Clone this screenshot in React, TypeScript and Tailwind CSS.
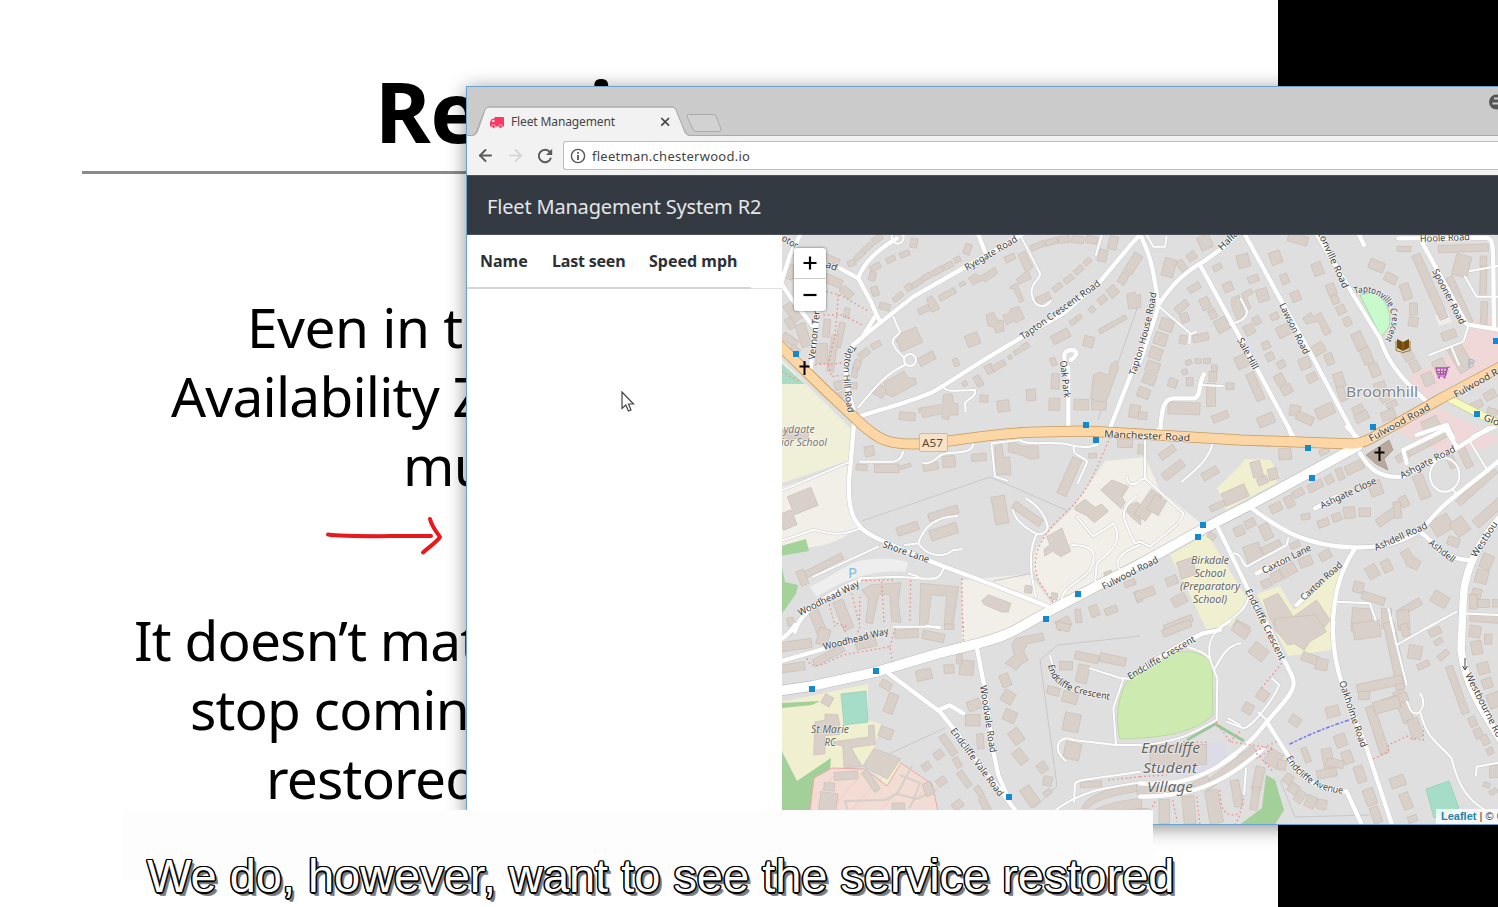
import { ArrowLeft, ArrowRight } from "lucide-react";

type Rect = [number, number, number, number, number];
type Tile = {
  x: number;
  y: number;
  rects: Rect[];
  shapes: string[];
  roads: string[];
  lanes: string[];
  paths: string[];
};

/* The map is surveyed in six sheets, each drawn at three times its size. */
const tiles: Tile[] = [
  {
    x: 780,
    y: 235,
    rects: [
      [215, 84, 24, 18, -20], [238, 62, 34, 17, -42], [262, 38, 34, 17, -42], [292, 12, 34, 18, -35],
      [332, 73, 28, 16, -25], [374, 57, 30, 16, -22], [402, 24, 20, 28, 12], [563, 42, 20, 32, 20],
      [286, 96, 34, 18, -30], [277, 124, 20, 26, 15], [285, 169, 20, 28, -18], [314, 215, 32, 20, 14],
      [354, 186, 34, 16, -38], [386, 157, 22, 20, -35], [411, 145, 34, 16, -32], [440, 125, 28, 17, -30],
      [473, 108, 36, 17, -30], [505, 92, 28, 17, -28], [532, 74, 20, 16, -25], [502, 178, 54, 18, -28],
      [547, 147, 18, 12, -25], [432, 224, 36, 18, -25], [690, 69, 32, 18, -25], [386, 313, 70, 50, -24],
      [578, 314, 40, 36, -22], [528, 382, 16, 24, -25], [440, 371, 52, 26, -28], [288, 330, 30, 17, -28],
      [252, 356, 36, 20, -38], [232, 388, 20, 28, 20], [224, 413, 17, 28, 5], [222, 452, 18, 20, 0],
      [773, 32, 44, 17, -22], [815, 20, 36, 18, -15], [852, 14, 34, 20, -5], [893, 14, 36, 20, 5], [935, 14, 34, 22, 12],
      [968, 62, 26, 36, 14], [999, 24, 26, 40, 12], [922, 80, 24, 16, -40], [896, 105, 30, 17, -40],
      [866, 132, 30, 17, -38], [832, 157, 30, 17, -38], [790, 190, 44, 22, -25], [1060, 85, 28, 64, 32],
      [1030, 130, 24, 34, 30], [998, 169, 30, 30, -40], [967, 194, 28, 20, -40], [936, 223, 18, 18, -45],
      [880, 260, 22, 15, -35], [897, 247, 18, 14, -35], [998, 268, 92, 14, -29], [842, 304, 56, 28, -27],
      [926, 320, 30, 32, 15], [820, 380, 16, 24, -20], [826, 439, 24, 46, 4], [823, 508, 32, 36, 2],
      [904, 509, 44, 32, 2], [957, 508, 44, 34, 3], [753, 480, 28, 34, -4], [670, 513, 36, 34, -8],
      [612, 491, 24, 22, 2], [712, 350, 22, 14, -30], [736, 334, 24, 17, -32], [690, 367, 12, 12, -30],
      [554, 446, 14, 14, -30], [595, 438, 20, 34, -30], [628, 402, 24, 28, -28], [656, 392, 44, 18, -30],
      [382, 544, 48, 24, 5], [300, 468, 34, 34, 30], [1064, 529, 32, 38, 10], [150, 72, 58, 20, 22],
      [160, 138, 54, 26, 24], [200, 172, 40, 24, 40], [40, 230, 34, 60, -35], [70, 300, 30, 70, -18], [30, 265, 22, 34, -30],
      [200, 234, 16, 30, 10], [180, 300, 18, 76, 12], [140, 280, 20, 54, 5], [125, 355, 34, 60, 0], [158, 355, 20, 110, 8],
      [30, 315, 50, 24, 35], [45, 345, 28, 20, 35], [30, 110, 26, 46, 14], [180, 450, 34, 26, -15], [184, 480, 50, 18, -15],
    ],
    shapes: [
      "M440 190l16-8 12 20 12 20-24 10-10-18z",
      "M565 130l22-14 14 8 44-28 8 20-36 24-12-4-26 14z",
      "M713 58l22-10 24 48-14 14 10 20-38 18-8-16 28-22z",
      "M690 155l20-10 22 52-12 6-20-44-8 4z",
      "M618 240l22-8 14 24 16 0 2 32-24 6-6-18-18-4z",
      "M668 240l20-4 4-14 24-8 18 36-26 14-6-6-22 12z",
      "M312 442l60-34 12 20 22 2 4 16-72 40-18-8z",
      "M416 520l72-12 2-28 26-4 4 28 14 2 0 34-26 0-2 14-20-4 0-14-58 12-2-14-10-2z",
      "M940 420l20-8 26 8 6-30 16-14 8 20-14 40-18 50-14 16-38-10z",
      "M1040 178l24-8 6 12 12-4 0 40-36 4z",
    ],
    roads: [
      "M180 100L235 130L275 205L290 240L302 262",
      "M220 328L302 262L400 185L540 105L700 15L730-5",
      "M285 245L245 310L222 328C195 355 195 400 200 450L225 540",
      "M235 130C250 80 300 40 350 10",
      "M225 550C300 520 340 520 450 475C500 450 540 415 720 310L850 235L960 140L1060 20L1080 0",
      "M90 420L100 330L115 230M0 140L30 185L98 272M60 0L30 60L5 140",
      "M865 580L865 400C845 365 850 345 875 345C900 348 885 368 872 375",
      "M990 580L1060 400L1080 340M595 0L615 50",
    ],
    lanes: [
      "M725 8L780 115C785 130 750 145 755 175C760 215 790 225 812 198",
      "M340 245L350 270L360 290C355 305 335 305 338 325L350 345L372 368M375 390C320 415 290 450 235 517",
      "M372 375a18 18 0 1 0 36 0a18 18 0 1 0-36 0M335 8a17 17 0 1 0 36 0a17 17 0 1 0-36 0",
      "M490 455C500 475 530 465 585 465C592 485 560 492 555 505L557 530",
      "M965 0L948 60",
    ],
    paths: ["M140 170L180 180L265 228M130 240L190 240L250 272M175 180L165 300L145 390L190 382M145 390L155 425L185 420M105 390L145 385M5 410L60 440"],
  },
  {
    x: 1140,
    y: 235,
    rects: [
      [155, 64, 28, 24, -35], [125, 92, 22, 34, -35], [195, 22, 38, 42, -25], [232, 97, 26, 18, -28], [264, 156, 28, 28, -25],
      [163, 158, 38, 20, -30], [196, 206, 28, 36, -25], [218, 237, 22, 28, -25], [245, 270, 38, 40, -28], [182, 308, 48, 22, -12],
      [310, 78, 36, 40, -15], [340, 132, 32, 20, -20], [368, 180, 34, 38, -18], [407, 68, 34, 38, -20], [434, 132, 22, 30, -20],
      [467, 184, 28, 30, -22], [404, 244, 24, 20, -22], [350, 257, 22, 24, -25], [328, 284, 30, 30, -28], [378, 331, 24, 22, -25],
      [390, 365, 24, 24, -25], [424, 388, 24, 22, -28], [420, 434, 28, 34, -28], [440, 464, 32, 28, -28], [432, 287, 42, 34, -25],
      [533, 102, 30, 38, -22], [574, 163, 26, 34, -22], [585, 194, 22, 26, -22], [603, 224, 26, 26, -25], [622, 260, 22, 26, -25],
      [657, 318, 32, 54, -25], [680, 363, 30, 48, -22], [704, 405, 28, 40, -22], [568, 372, 24, 34, -20], [494, 385, 34, 34, -22],
      [532, 344, 46, 32, -32], [516, 428, 30, 26, -26], [598, 436, 30, 46, -18], [606, 476, 22, 44, -22], [720, 455, 34, 26, -18],
      [710, 92, 46, 30, 22], [752, 130, 38, 26, 28], [798, 170, 28, 48, -18], [820, 222, 24, 36, 0], [820, 260, 28, 28, 10],
      [346, 455, 26, 88, -24], [305, 380, 36, 38, -25], [241, 545, 50, 22, -22], [132, 520, 96, 36, 2], [270, 454, 24, 20, 0],
      [146, 382, 18, 15, -25], [174, 378, 18, 14, 0], [201, 378, 20, 15, 0], [223, 400, 17, 20, 0], [218, 424, 22, 30, 0],
      [134, 411, 16, 16, -15], [149, 440, 20, 26, 0], [98, 444, 26, 26, 20], [213, 480, 26, 68, 0], [129, 314, 20, 26, 10],
      [80, 270, 40, 36, 18], [62, 312, 38, 36, 18], [47, 355, 38, 34, 20], [38, 396, 40, 32, 20], [28, 432, 38, 32, 20],
      [11, 474, 36, 30, 20], [8, 542, 26, 22, 5], [125, 215, 44, 22, -40], [134, 248, 24, 28, -20], [87, 98, 36, 54, 15],
      [870, 155, 26, 210, -24], [958, 195, 22, 150, -24], [965, 92, 46, 64, 15], [970, 40, 150, 22, -2], [792, 42, 42, 16, 0],
      [1030, 138, 20, 90, 2], [1032, 235, 20, 70, 2], [1030, 78, 20, 30, 2], [927, 300, 44, 26, -20],
      [805, 362, 30, 30, -28], [825, 394, 26, 32, -28], [864, 432, 32, 38, -22], [900, 396, 36, 46, -25], [962, 370, 46, 80, -30],
      [655, 525, 34, 26, -25], [665, 545, 42, 26, -25], [745, 540, 42, 28, -20], [735, 490, 28, 20, -30], [755, 508, 32, 18, -25],
      [465, 527, 32, 32, 10], [495, 550, 52, 26, 24], [555, 528, 56, 34, -25], [378, 555, 50, 32, -22], [474, 12, 60, 28, 15],
      [872, 568, 52, 36, -25], [1010, 510, 36, 22, -25], [1050, 480, 36, 26, -28], [1056, 530, 30, 20, 20],
    ],
    shapes: [
      "M275 190l22-10 18 60-24 14-16-40z",
      "M305 175l28-14 8 12-22 14 14 32-12 6z",
      "M488 250l24-18 8 12 22-12 32 60-20 10-20-44-34 10z",
    ],
    roads: [
      "M55 208C45 150 40 80 10 20L0-5M55 210C90 160 120 120 190 80L260 30L295-5",
      "M55 208C50 240 20 320 0 380",
      "M180 90L290 290L350 400L460 605M310-10L420 190L520 370L645 605",
      "M520-20L640 180L720 310C740 370 770 420 860 500",
      "M845 20L900 120L980 268L1080 285M775 10L1040 8C1065 15 1058 30 1062 275",
      "M655-5L672 30M60 595C65 540 65 490 100 490L165 490C185 480 175 440 192 418",
      "M830 600L920 570L940 610M1000 605L1075 570",
    ],
    lanes: [
      "M55 212L150 295L148 325M150 300L168 290M185 450L248 453",
      "M270 268C305 260 325 245 320 225L303 192M20 0L40 35L75 35L80 5",
      "M985 275L970 320L868 360M935 338L957 390M990 108L1074 93M975 125L1010 185L1074 185",
    ],
    paths: [],
  },
  {
    x: 780,
    y: 430,
    rects: [
      [268, 64, 28, 30, -10], [245, 112, 34, 18, 5], [320, 115, 74, 26, 0], [376, 109, 34, 10, -18], [452, 110, 46, 22, -10],
      [507, 95, 38, 34, -5], [597, 82, 44, 22, -5], [938, 77, 24, 14, -5], [868, 140, 30, 118, 24], [490, 250, 92, 24, -17],
      [383, 296, 66, 26, -18], [491, 305, 84, 32, -18], [660, 240, 40, 84, -10], [742, 252, 100, 24, 35], [130, 407, 128, 20, -27],
      [67, 443, 24, 46, -22], [68, 213, 76, 58, -22], [22, 270, 44, 48, -22], [745, 478, 22, 22, 10], [823, 499, 18, 20, 10],
      [985, 432, 24, 16, -20], [895, 558, 18, 40, -5], [943, 543, 26, 34, -22], [993, 541, 38, 20, -22], [850, 580, 44, 30, -25],
      [1050, 460, 34, 18, -20], [1075, 500, 18, 34, -20], [1035, 40, 44, 26, 0], [32, 575, 20, 24, -15],
      [45, 15, 80, 20, 8], [115, 580, 30, 90, -22], [190, 555, 32, 90, -22], [15, 15, 60, 22, 10],
    ],
    shapes: [
      "M645 50l20-8 6 40 18 0 4 52-46 0z",
      "M685 38l20 0 20 10 50 0 2 36-24 4-40-16-28-6z",
      "M605 512l20-18 68 26-8 26-20 0-52-22z",
      "M962 180l34-30 50 20-20 32 10 14-12 20z",
      "M885 230l30-22 30 24 20-10 20 22-42 34-24-22-34-16z",
      "M800 320l46-26 14 40 12 30-30 16-24-16-24 14-2-20 18-14z",
      "M1030 235l40-20 12 10 0 60-24-20z",
      "M245 480l30-16 88-6-8 60 8 60-28-4-6-80-32-2-20 90-20-6 8-70z",
      "M422 460l114 10-18 122-26-4 8-90-46-4-12 100-24-4z",
    ],
    roads: ["M222-20L212 100C205 150 200 210 220 260C245 310 270 320 480 405L640 465L825 538", "M240 450C150 490 60 540 45 605"],
    lanes: [
      "M5 332L100 300C140 305 170 325 240 295M5 182L210 95M240 95L340 95C360 92 365 80 370 65",
      "M430 100C470 100 465 75 500 70C560 65 575 65 580 42M635 45L645 140L682 152M635 40L720 30C740 50 830 30 870 45C910 55 940 50 955 42",
      "M882 48C875 80 905 75 922 95L893 160M738 205C790 235 810 290 800 300C780 325 765 310 735 290C710 270 705 260 698 240",
      "M770 312C740 370 755 450 768 500M532 258C470 260 430 290 415 340L375 345M415 340C440 380 490 385 520 360L545 358",
      "M295 350L100 440M490 415C480 460 450 445 350 440L240 445M385 430L415 440",
      "M890 260L940 320L1000 280C1030 330 1000 360 950 400L945 465M875 345C940 345 955 370 930 420C900 460 840 470 845 520",
      "M1070 200C1010 240 1030 270 1065 340L1080 335M1080 345C1010 370 1000 400 1025 425M1042 140C1040 170 1065 165 1080 152M340 590L480 590",
    ],
    paths: [
      "M997 10C950 100 940 170 860 245C790 310 740 380 780 460L825 525",
      "M545 445L548 600M230 452L345 450M305 455L312 580M392 450L390 575M145 510L165 590M215 490L235 570M240 500L238 590M170 580L200 590",
    ],
  },
  {
    x: 1140,
    y: 430,
    rects: [
      [5, 58, 22, 28, 10], [82, 67, 52, 22, -35], [100, 120, 74, 26, -38], [210, 130, 52, 24, -30], [435, 72, 38, 34, -5],
      [285, 195, 76, 40, -24], [232, 228, 46, 18, -24], [350, 118, 30, 48, -15], [368, 152, 32, 22, -25], [399, 132, 28, 34, -15],
      [408, 233, 36, 26, -25], [448, 215, 26, 34, -25], [475, 189, 34, 22, -28], [526, 168, 48, 24, -28], [568, 148, 24, 26, -28],
      [600, 132, 20, 36, -22], [643, 112, 56, 28, -26], [552, 65, 30, 16, -25], [497, 260, 26, 18, -10], [550, 279, 34, 22, -20],
      [590, 262, 28, 24, -20], [628, 248, 34, 34, -5], [674, 247, 34, 26, 0], [707, 175, 38, 44, -20], [792, 215, 24, 32, -28],
      [745, 258, 80, 26, -35], [772, 240, 22, 50, -5], [845, 170, 32, 74, -22], [298, 303, 30, 28, -22], [330, 280, 32, 24, -25], [378, 305, 30, 48, -25],
      [340, 370, 50, 54, -18], [395, 352, 60, 24, -24], [380, 460, 30, 24, -25], [410, 440, 30, 30, -25], [445, 420, 46, 34, -30],
      [497, 395, 40, 28, -22], [556, 376, 36, 26, -28], [465, 345, 30, 18, -25], [697, 425, 34, 38, -30], [740, 408, 28, 36, -25],
      [655, 472, 30, 32, 15], [700, 505, 70, 24, 18], [900, 508, 50, 36, 30], [812, 530, 70, 22, -30], [790, 570, 36, 60, -5],
      [740, 565, 30, 60, 0], [665, 570, 60, 70, 5], [1030, 520, 36, 24, 0], [1010, 490, 28, 28, 15], [1025, 440, 36, 40, 15],
      [1040, 395, 34, 44, 22], [1000, 515, 22, 44, 0], [1035, 565, 90, 24, 4], [1068, 520, 20, 22, 0], [215, 318, 24, 18, 35],
      [15, 490, 60, 26, -20], [118, 510, 44, 30, -28], [95, 452, 34, 26, -20], [140, 415, 48, 52, -18], [115, 580, 90, 22, -22],
      [25, 225, 40, 90, 35], [50, 225, 40, 50, 30], [940, 335, 36, 26, 20], [905, 285, 60, 50, -30], [960, 290, 44, 50, -35],
      [1010, 170, 150, 22, -42], [1055, 240, 130, 30, -42], [975, 80, 24, 70, -25], [870, 35, 150, 22, -28], [935, 95, 22, 40, -25], [788, 80, 40, 22, -30],
      [305, 590, 48, 24, 30],
    ],
    shapes: [
      "M370 510l44-20 50 76-20 30-34 10-24-50z",
      "M460 560l70-50 40 60-30 40-66 20z",
      "M780 370l24-16 14 22 26 20-14 24-30-12-6-18z",
    ],
    roads: [
      "M335 235C400 280 480 350 640 352C760 355 830 320 870 270C920 210 960 190 1080 90",
      "M525 235L590 200M660 70C690 120 720 145 790 140L950 55L1045-5M800 100L790 60L912 0M912-10L950 50",
      "M235 295L320 470L385 600M845 310C880 330 900 385 985 390",
      "M645 355C610 410 580 470 578 605M620-10L655 25M455 20L445-10",
      "M350 430L440 385M470 525L500 495",
    ],
    lanes: [
      "M870 135a44 50 0 1 0 88 0a44 50 0 1 0-88 0M990 35L1045 125M940 180L950 195",
      "M960 550L1080 555M950 545L850 600M590 515L690 520L707 570M745 535L762 605",
      "M282 370C310 375 300 395 320 410L440 345L445 325M325 505C310 550 280 560 230 600M218 38C210 80 180 110 125 155",
      "M15 30L15 140M15 145L130 250C125 280 90 300 30 350L0 335M0 150L18 145M50-5L62 0",
    ],
    paths: [],
  },
  {
    x: 780,
    y: 625,
    rects: [
      [50, 60, 90, 28, -8], [145, 92, 100, 22, -28], [257, 52, 62, 34, -12], [40, 127, 70, 24, -8], [130, 35, 34, 50, 15],
      [380, 26, 70, 26, -4], [460, 34, 66, 26, 12], [432, 149, 46, 32, -12], [507, 132, 30, 26, -4], [560, 128, 42, 44, 5], [538, 102, 16, 30, 5],
      [318, 180, 34, 24, 30], [333, 235, 30, 60, 20], [318, 324, 40, 32, 20], [582, 240, 40, 30, -22], [578, 286, 44, 34, 0], [601, 349, 20, 46, -5],
      [676, 166, 28, 38, -22], [684, 216, 36, 36, 30], [690, 273, 38, 34, 25], [709, 334, 34, 44, -35], [721, 395, 30, 46, -38],
      [787, 427, 28, 30, -38], [750, 514, 34, 62, -35], [803, 468, 26, 28, 10], [803, 503, 24, 16, -35],
      [505, 360, 22, 70, -35], [476, 389, 28, 24, -35], [439, 424, 26, 22, -35], [532, 413, 18, 32, -30], [553, 462, 20, 54, -35],
      [484, 470, 30, 24, -35], [597, 499, 18, 32, -35], [533, 540, 32, 24, -35], [615, 540, 22, 48, -25], [142, 226, 28, 30, 30],
      [920, 97, 72, 24, 12], [998, 104, 80, 26, 12], [858, 122, 40, 26, 0], [908, 146, 34, 54, 12], [820, 198, 38, 24, 15], [870, 218, 46, 32, 15],
      [875, 292, 48, 54, 12], [877, 378, 48, 50, 12], [933, 478, 64, 18, -4], [850, 5, 40, 22, 15], [508, 5, 28, 16, 0],
      [198, 452, 70, 24, -4], [273, 468, 20, 70, -35], [148, 485, 32, 24, 5], [145, 530, 52, 54, 8], [445, 492, 26, 40, -20], [355, 545, 38, 22, 0],
    ],
    shapes: [
      "M695 60l12-20 80-16 6 22-50 10-12 22 14 28-22 12-14 18-34-22 28-24z",
      "M105 290l30-4 0-18 38 0 6 30 0 30-44 4 0 54-34 4z",
      "M160 350l106-14 0-34 16-2 4 58-72 10 20 36 14 22-56 2-4-66-28-4z",
      "M282 370l80 32-40 60-74-38z",
      "M905 550c20-50 100-60 180-80l0 26c-70 15-130 20-160 54z",
      "M940 558c40-25 90-30 145-40l0 36z",
    ],
    roads: [
      "M325 145L480 260L520 310L600 420L665 500L712 565M590 65L612 180L640 380L655 450L685 520",
      "M475 255L510 241L550 265M5 108L130 72M45 0C35 20 20 30 5 42",
    ],
    lanes: [
      "M810 92L825 145M930 130L1030 162L1000 250L1008 360L880 345C840 325 810 370 858 408M1008 360L1080 360",
      "M882 530L885 475C900 462 920 465 1080 440M820 560C900 500 960 490 1085 472M440 2L480 10M1030 160L1050 162",
    ],
    paths: ["M550-10L550 60M80 100C100 150 150 100 200 88L330 65L338 120M330 65L345 10M985 465L1080 455M190 5L200 30M240 5L232 25"],
  },
  {
    x: 1140,
    y: 625,
    rects: [
      [110, 10, 90, 22, -22], [303, 16, 50, 32, 35], [356, 80, 50, 40, 38], [368, 210, 32, 32, 35], [324, 250, 30, 30, 30],
      [465, 287, 32, 28, 35], [578, 260, 40, 32, -15], [602, 347, 34, 38, -20], [622, 397, 30, 38, -20], [660, 448, 28, 50, -18],
      [690, 516, 32, 50, -20], [708, 570, 26, 50, -20], [773, 470, 44, 32, -20], [798, 528, 28, 50, -22], [818, 582, 28, 20, -20],
      [115, 388, 170, 60, 0], [510, 100, 50, 26, 20], [545, 118, 36, 34, 10], [825, 82, 40, 40, 10], [850, 120, 38, 18, -25],
      [910, 90, 36, 18, -40], [895, 50, 26, 16, -35], [885, 20, 36, 22, -25], [795, 15, 22, 38, -18], [1010, 68, 32, 40, -10], [1030, 130, 34, 34, -15],
      [1042, 175, 30, 30, -18], [1065, 225, 44, 44, -20], [1005, 20, 34, 34, 10], [1045, 42, 22, 30, 0], [952, 195, 22, 150, -20],
      [998, 290, 22, 30, -22], [1015, 325, 24, 30, -25], [1035, 345, 22, 30, -25], [1050, 378, 20, 20, -25], [1062, 440, 26, 36, 0], [1040, 480, 20, 14, 25], [1060, 500, 24, 14, -30],
      [765, 85, 32, 190, -12], [720, 178, 140, 28, -12], [680, 15, 80, 50, -8], [790, 245, 32, 100, -20], [765, 225, 80, 26, -18],
      [712, 315, 28, 150, -18], [825, 310, 34, 60, -18], [740, 240, 80, 36, -15], [672, 212, 32, 24, 0], [780, 185, 26, 16, 0],
      [400, 400, 44, 46, 30], [425, 420, 26, 30, 10], [445, 462, 26, 30, 35], [460, 490, 30, 30, 35], [480, 515, 26, 36, 38], [512, 530, 30, 36, 25], [545, 538, 30, 28, 10],
      [270, 430, 190, 26, -38], [185, 475, 50, 26, -25], [290, 505, 26, 80, -10], [355, 460, 28, 70, 12], [345, 520, 22, 70, 8],
      [222, 545, 40, 100, -10], [147, 555, 36, 84, -5], [73, 560, 32, 72, 0], [20, 490, 60, 32, -5],
      [498, 390, 18, 46, -20], [565, 410, 30, 80, -10], [585, 415, 52, 24, 10], [560, 445, 60, 26, -10], [10, 570, 30, 40, 0],
    ],
    shapes: ["M405-20l120-10 34 50-50 30-16 26-30-20-20 4-40-50z"],
    roads: [
      "M378-10L430 100L455 150C470 180 465 200 380 290L440 385C470 450 520 495 620 500L668 605",
      "M580-10C575 60 590 130 610 190L680 370L758 605",
      "M380 290C330 360 280 390 240 420M0 515C150 515 250 480 370 370M0 475C100 480 180 470 285 390",
      "M0 135C70 90 130 50 190 25L240 15",
    ],
    lanes: [
      "M0 362C120 350 170 320 230 285L232 160C220 130 205 100 208 80C205 50 220 15 272-10M140 65C180 75 200 90 208 100M225 130C250 80 270 60 302 55",
      "M750-20L780 100L800 180M770 60L885-5M840 205C860 230 845 270 825 265C805 260 810 240 800 230M842 265C860 340 890 350 935 400C955 490 990 530 1040 558",
      "M395 160L418 180C390 240 330 310 310 310L260 290M355 262L380 285M1008 452L1010 425L1080 412M318 430L312 510M265 280L300 300",
    ],
    paths: [
      "M425 115L360 195M228 290L270 350L400 370L350 400M300 320L270 350M410 350L345 380L400 440M700 402L745 380L745 360L810 330M810 340L850 345L850 305",
      "M0 455L80 450M45 530L30 560M98 525L112 590M170 515L180 600M240 495C240 560 260 580 300 565L312 510M285 600L300 570M130 350L200 352",
    ],
  },
];

const straight: [string, number, number, number, number][] = [
  ["Ryegate Road", 967, 271, 1018, 241],
  ["Tapton Crescent Road", 1023, 340, 1101, 285],
  ["Oak Park", 1060, 361, 1064, 398],
  ["Vernon Ter", 815, 360, 820, 311],
  ["Halla", 1222, 251, 1239, 234],
  ["tonville Road", 1318, 234, 1343, 289],
  ["Lawson Road", 1279, 305, 1304, 355],
  ["Sale Hill", 1237, 340, 1253, 370],
  ["Spooner Road", 1432, 271, 1460, 325],
  ["Hoole Road", 1420, 242, 1470, 240],
  ["Fulwood R", 1456, 398, 1499, 374],
  ["Fulwood Road", 1371, 442, 1431, 409],
  ["Manchester Road", 1104, 437, 1190, 441],
  ["Glo", 1483, 420, 1498, 426],
  ["Ashgate Road", 1402, 479, 1456, 451],
  ["Ashgate Close", 1322, 509, 1377, 483],
  ["Ashdell Road", 1376, 551, 1428, 528],
  ["Ashdell", 1428, 544, 1452, 563],
  ["Westbou", 1476, 558, 1498, 524],
  ["Caxton Lane", 1264, 574, 1312, 550],
  ["Caxton Road", 1304, 601, 1343, 566],
  ["Endcliffe Crescent", 1245, 591, 1280, 661],
  ["Endcliffe Crescent", 1130, 680, 1196, 641],
  ["Woodvale Road", 980, 686, 990, 753],
  ["Endcliffe Vale Road", 950, 731, 999, 797],
  ["Oakholme Road", 1339, 682, 1361, 748],
  ["Westbourne Ro", 1465, 675, 1497, 738],
  ["Woodhead Way", 800, 616, 860, 586],
  ["Woodhead Way", 824, 650, 889, 634],
  ["Shore Lane", 882, 547, 928, 563],
  ["Fulwood Road", 1104, 590, 1159, 562],
  ["otor", 781, 240, 796, 249],
  ["ad", 825, 267, 836, 271],
];

const curved: [string, string, number][] = [
  ["Tapton House Road", "M1135 376Q1149 335 1157 291", 86],
  ["Tapton Hill Road", "M851 344C840 360 843 385 848 414", 71],
  ["Taptonville Crescent", "M1355 294C1372 288 1391 299 1392 320Q1390 334 1382 345", 74],
  ["Endcliffe Crescent", "M1048 665C1052 690 1075 694 1117 701", 76],
  ["Endcliffe Avenue", "M1286 758Q1304 791 1346 794", 70],
];

const centred: [string, number, number, number, string][] = [
  ["Birkdale", 1210, 564, 38, "#666"],
  ["School", 1210, 577, 31, "#666"],
  ["(Preparatory", 1210, 590, 60, "#666"],
  ["School)", 1210, 603, 34, "#666"],
  ["St Marie", 830, 733, 38, "#666"],
  ["RC", 830, 746, 11, "#666"],
  ["ydgate", 799, 433, 31, "#777"],
  ["ior School", 804, 446, 46, "#777"],
];

const stops = [
  [796, 354], [1086, 425], [1096, 440], [1373, 427], [1308, 448], [1312, 478], [1203, 525], [1198, 537],
  [1078, 594], [1046, 619], [876, 671], [812, 689], [1009, 797], [1477, 414], [1496, 341],
];

const FULWOOD = "M778 691L812 686L876 672L940 653L980 643C1010 635 1015 630 1053 609L1093 588L1140 564L1203 529L1250 505L1307 474L1358 446";
const A57 = "M776 342L823 388L857 420C880 442 890 444 913 444C950 444 980 433 1040 432L1085 431L1140 434L1240 440L1353 444Q1366 443 1380 433L1400 422L1440 399L1502 366";
const WESTBOURNE = "M1502 516C1480 540 1463 570 1463 605L1461 650C1465 680 1475 700 1502 742";

function place(t: Tile) {
  return `translate(${t.x} ${t.y}) scale(.33333)`;
}

function StreetMap() {
  return (
    <svg viewBox="782 235 716 589" className="block h-[589px] w-[716px]" fontFamily="'Noto Sans', 'Open Sans', sans-serif" fontSize="10">
      <rect x="782" y="235" width="716" height="589" fill="#dfdfdf" />
      {/* land use */}
      <path d="M780 358L852 430L850 460L780 484Z" fill="#f0f0d8" />
      <path d="M780 362L805 384L780 384Z" fill="#a9dcc4" />
      <path d="M780 488L850 464L850 500L860 528L838 540L825 545L780 552Z" fill="#f2eee8" />
      <path d="M962 580L1030 574L1055 608L1020 625L962 643Z" fill="#f2eee8" />
      <path d="M1105 461L1145 457L1160 490L1203 525L1055 606L1034 572C1028 540 1060 525 1075 505Z" fill="#f2eee8" />
      <path d="M781 546L806 539L809 551L781 556ZM781 562L785 582L798 585L796 594L781 615Z" fill="#a3d39b" />
      <path d="M1217 488L1240 466L1245 459L1270 460L1280 475L1276 483L1226 510Z" fill="#f0f0d0" />
      <path d="M1170 555L1207 534L1248 600L1232 625L1206 629L1190 595Z" fill="#f0f0d0" />
      <path d="M1257 594L1280 586L1294 610L1340 566L1331 650L1288 656Z" fill="#f0f0d0" />
      <path d="M782 702L868 684L868 720L881 724L874 747L901 763L887 786L870 768L832 768L797 781L782 750Z" fill="#f0f0d0" />
      <path d="M782 752L797 781L831 758L830 770L824 830L782 830Z" fill="#a3cf98" />
      <path d="M782 703L820 701L812 705L782 708Z" fill="#a3cf98" />
      <path d="M814 778L832 768L864 769L887 786L901 763L932 784L938 811L810 811Z" fill="#f3dcd4" stroke="#e9aaaa" />
      <path d="M814 798l22-24M830 810l34-38M850 811l40-42M880 811l25-28M905 811l20-22" stroke="#efc4bc" strokeWidth=".7" />
      <path d="M848 811l-3-10 40-1 12-6 15-28M897 794l20 5 20-10M900 775l20 8-10 25" fill="none" stroke="#d5d0cc" strokeWidth="2" />
      <path d="M841 694L866 691L868 722L844 725Z" fill="#a6ddc9" stroke="#8bcdb5" strokeWidth=".7" />
      <path d="M1426 789L1449 781L1459 808L1434 818Z" fill="#a6ddc9" stroke="#8bcdb5" strokeWidth=".7" />
      <path d="M1120 739C1115 720 1116 690 1136 670L1160 658C1180 648 1200 650 1212 662L1213 715C1195 732 1165 738 1120 739Z" fill="#cdebb0" stroke="#b9dba0" />
      <path d="M1266 775L1275 780L1284 810L1274 826L1238 826L1262 808Z" fill="#a3cf98" />
      <path d="M1177 745L1224 742L1229 763L1180 782Z" fill="#dcdbe8" />
      <path d="M1360 295L1374 292C1388 302 1392 315 1389 327L1381 337Z" fill="#c8facc" stroke="#a6d9ad" />
      <path d="M1408 378L1460 350L1470 320L1500 315L1500 362L1425 398ZM1395 430L1440 408L1500 440L1480 450L1440 452Z" fill="#f0d8d9" />
      <path d="M866 323L878 318L872 328Z" fill="#cdebb0" />
      <path d="M810 587L853 563C870 557 900 558 908 563L905 572C880 570 850 575 817 597Z" fill="#eee" />
      <path d="M1435 315l12-5 5 12-13 4z" fill="#eee" />
      <path d="M862 521L990 477L1068 511M1140 300L1098 420M1040 660L1058 645L1140 636M1040 660L1057 786L1034 808M993 581L1034 573M865 765L945 728M1280 780L1295 817L1370 815" fill="none" stroke="#c8c8c8" />
      <path d="M1187 740L1215 724L1244 741" fill="none" stroke="#9ac79b" strokeWidth="3" />

      {/* buildings */}
      <g fill="#d9d0c9" stroke="#c9beb6" strokeWidth="2">
        {tiles.map((t) => (
          <g key={`b${t.x}-${t.y}`} transform={place(t)}>
            {t.rects.map(([cx, cy, w, h, a], i) => (
              <rect key={i} x={cx - w / 2} y={cy - h / 2} width={w} height={h} transform={`rotate(${a} ${cx} ${cy})`} />
            ))}
            {t.shapes.map((d) => <path key={d} d={d} />)}
          </g>
        ))}
      </g>
      <path d="M1366 455L1389 440L1393 450L1384 459L1388 470L1376 464Z" fill="#b9a99c" stroke="#a39284" strokeWidth=".7" />

      {/* streets: casing below, surface above */}
      <g fill="none" strokeLinejoin="round" strokeLinecap="round">
        {tiles.map((t) => (
          <g key={`c${t.x}-${t.y}`} transform={place(t)} stroke="#cccccc">
            {t.lanes.map((d) => <path key={d} d={d} strokeWidth="9" />)}
            {t.roads.map((d) => <path key={d} d={d} strokeWidth="16" />)}
          </g>
        ))}
        <path d={FULWOOD} stroke="#bdbdbd" strokeWidth="11" />
        <path d={WESTBOURNE} stroke="#c6c6c6" strokeWidth="8.5" />
        {tiles.map((t) => (
          <g key={`r${t.x}-${t.y}`} transform={place(t)} stroke="#fff">
            {t.lanes.map((d) => <path key={d} d={d} strokeWidth="6" />)}
            {t.roads.map((d) => <path key={d} d={d} strokeWidth="13" />)}
            {t.paths.map((d) => <path key={d} d={d} stroke="#f0908c" strokeWidth="4" strokeDasharray="5 8" strokeLinecap="butt" />)}
          </g>
        ))}
        <path d={WESTBOURNE} stroke="#fff" strokeWidth="7.5" />
        <path d="M1448 398L1477 413L1500 424" stroke="#c4c58a" strokeWidth="8" />
        <path d="M1448 398L1477 413L1500 424" stroke="#f6fabf" strokeWidth="7" />
        <path d={A57} stroke="#c79a5f" strokeWidth="11" />
        <path d={FULWOOD} stroke="#fff" strokeWidth="9.8" />
        <path d={A57} stroke="#fcd6a4" strokeWidth="9.4" />
        <path d="M1290 744C1310 734 1330 726 1352 719" stroke="#7a7af0" strokeWidth="1.6" strokeDasharray="3 3 1 3" />
      </g>

      <rect x="919.5" y="433.5" width="28" height="18" rx="1.5" fill="#f7e2c8" stroke="#d9b88e" />
      <text x="922" y="447" textLength="21" lengthAdjust="spacingAndGlyphs" fontSize="11" fill="#5d4a35">A57</text>

      {stops.map(([x, y]) => <rect key={`${x}-${y}`} x={x - 3} y={y - 3} width="6" height="6" fill="#1389cf" />)}

      {/* churches, library, shop and parking */}
      <path d="M804.5 361V375M799.5 366.500H809.500M1379.500 447V461M1374.500 452.500H1384.500" stroke="#000" strokeWidth="2" />
      <path d="M1397 339l6 3 6-3v9l-6 3-6-3z" fill="#734a08" />
      <path d="M1403 342v9M1396 341v9.500l7 2 7-2V341" fill="none" stroke="#9a7436" strokeWidth="1" />
      <path d="M1450 367l-2.500 .5-2 8.500h-8M1437 371.500h9M1440.500 369v6M1443.500 369v6" fill="none" stroke="#b24bb5" strokeWidth="1.2" />
      <path d="M1436 368h11l-1.500 6h-8z" fill="none" stroke="#b24bb5" strokeWidth="1.3" />
      <path d="M1438 377.500h2M1443.500 377.500h2" stroke="#b24bb5" strokeWidth="2" />
      <text x="848" y="578" fontSize="15" fill="#7fc0e2">P</text>
      <text x="1467" y="368" fontSize="13" fill="#8bbfdb">P</text>
      <path d="M1465 658V669M1462.500 666L1465 670L1467.500 666" fill="none" stroke="#444" />

      {/* names */}
      <g fill="#3f3f3f" stroke="#fff" strokeOpacity=".55" strokeWidth="1.600" paintOrder="stroke" fontSize="9.600">
        {straight.map(([s, x1, y1, x2, y2]) => {
          const length = Math.hypot(x2 - x1, y2 - y1);
          const angle = (Math.atan2(y2 - y1, x2 - x1) * 180) / Math.PI;
          return (
            <text key={`${s}${x1}`} textLength={length} lengthAdjust="spacingAndGlyphs" transform={`translate(${x1} ${y1}) rotate(${angle})`}>
              {s}
            </text>
          );
        })}
        {curved.map(([s, d, length], i) => (
          <g key={d}>
            <path id={`street-${i}`} d={d} fill="none" stroke="none" />
            <text fontSize="9.300">
              <textPath href={`#street-${i}`} textLength={length} lengthAdjust="spacingAndGlyphs">{s}</textPath>
            </text>
          </g>
        ))}
      </g>
      <g fontStyle="italic" stroke="#fff" strokeOpacity=".5" strokeWidth="1.500" paintOrder="stroke">
        {centred.map(([s, x, y, w, c]) => (
          <text key={`${s}${y}`} x={x - w / 2} y={y} textLength={w} lengthAdjust="spacingAndGlyphs" fill={c}>{s}</text>
        ))}
        <g fontSize="14" fill="#686868">
          <text x="1141" y="753" textLength="59" lengthAdjust="spacingAndGlyphs">Endcliffe</text>
          <text x="1143" y="772.500" textLength="54" lengthAdjust="spacingAndGlyphs">Student</text>
          <text x="1147" y="791.500" textLength="46" lengthAdjust="spacingAndGlyphs">Village</text>
        </g>
      </g>
      <text x="1346" y="397" textLength="72" lengthAdjust="spacingAndGlyphs" fontSize="14.500" fill="#848484" stroke="#fff" strokeOpacity=".7" strokeWidth="2" paintOrder="stroke">Broomhill</text>
    </svg>
  );
}

function TabStrip() {
  return (
    <div className="relative flex h-[49px] items-end bg-[#cbcbcb]">
      <svg className="absolute left-0 top-0 h-[49px] w-[1031px]" viewBox="467 87 1031 49">
        <path d="M467 135.500H473C478 134 483 107 489 107H672C678 107 682 134 689 135.500H1498" fill="none" stroke="#aaa" />
        <path d="M467 136H472C476 135 477 133 478 130L485 110Q486 107.500 489 107.500H672Q675 107.500 676 110L684 130C685 133 686 135 690 136Z" fill="#f2f2f2" />
        <path d="M472 135.500C476 135 477 133 478 130L485 110Q486 107 489 107H672Q675 107 676 110L684 130C685 133 686 135 690 135.500" fill="none" stroke="#aaa" />
        <path d="M688.500 114.500H713Q715 114.500 716 116L721 129Q721.500 131.500 719 131.500H696Q694 131.500 693 129.500L687 116.500Q686.500 114.500 688.500 114.500Z" fill="#d2d2d2" stroke="#aaa" />
        <path d="M494.500 117H503Q504 117 504 118V126.500H490V122L492 118.800H494.500ZM491.500 122H494.500V120H492.700Z" fill="#fb3a62" fillRule="evenodd" />
        <circle cx="493.500" cy="126.500" r="1.800" fill="#fb3a62" stroke="#f2f2f2" strokeWidth=".6" />
        <circle cx="500.500" cy="126.500" r="1.800" fill="#fb3a62" stroke="#f2f2f2" strokeWidth=".6" />
        <path d="M661.300 118L669 125.700M669 118L661.300 125.700" stroke="#444" strokeWidth="1.700" />
        <circle cx="1496.500" cy="102" r="7.500" fill="#555" />
        <path d="M1494 98.500H1498M1492.500 103.500H1498" stroke="#cbcbcb" strokeWidth="2" />
      </svg>
      <div className="relative pb-[5px] pl-11 text-[12px] leading-[19px] tracking-[-0.13px] text-[#444]">Fleet Management</div>
    </div>
  );
}

function Toolbar() {
  return (
    <div className="flex h-[39px] items-start bg-[#f2f2f2] pt-[5px]">
      <div className="flex h-[29px] w-[96px] items-center gap-[11px] pl-[9px] text-[#5a5a5a]">
        <ArrowLeft className="size-[19px] shrink-0" strokeWidth={2.4} />
        <ArrowRight className="size-[19px] shrink-0 text-[#d2d2d2]" strokeWidth={2.2} />
        <svg viewBox="0 0 18 18" className="size-[18px] shrink-0">
          <path d="M14 5.200A6.200 6.200 0 1 0 15 10.800" fill="none" stroke="currentColor" strokeWidth="2" />
          <path d="M16.200 1.800V8H10Z" fill="currentColor" />
        </svg>
      </div>
      <div className="flex h-[29px] flex-1 items-center gap-[6px] rounded-l-[3px] border border-r-0 border-[#bdbdbd] bg-white pl-[6px]">
        <svg viewBox="0 0 16 16" className="size-4">
          <circle cx="8" cy="8" r="6.600" fill="none" stroke="#555" strokeWidth="1.400" />
          <path d="M8 7V12M8 4V5.700" stroke="#555" strokeWidth="1.800" />
        </svg>
        <span className="text-[13px] leading-5 tracking-[0.27px] text-[#444]">fleetman.chesterwood.io</span>
      </div>
    </div>
  );
}

function VehicleTable() {
  return (
    <section className="w-[315px] bg-white">
      <div className="flex h-[54px] border-b border-[#dee2e6]">
        <div className="flex h-[54px] w-[284px] border-b-2 border-[#d2d5d9] pt-[14px] text-[16px] font-bold leading-[25px] text-[#2b3036]">
          <span className="w-[85px] pl-[13px]">Name</span>
          <span className="w-[97px] tracking-[-0.2px]">Last seen</span>
          <span className="whitespace-nowrap">Speed mph</span>
        </div>
      </div>
    </section>
  );
}

function BrowserWindow() {
  return (
    <div className="absolute left-[466px] top-[86px] flex h-[739px] w-[1040px] flex-col border border-[#6ba3cf] bg-white shadow-[0_3px_18px_rgba(0,0,0,0.45)]">
      <TabStrip />
      <Toolbar />
      <header className="flex h-[60px] shrink-0 items-center border-y border-[#4d5159] bg-[#343a42] pl-5 pt-[3px] text-[20px] text-[#e4e6e8]">
        <span className="tracking-[-0.18px]">Fleet Management System R2</span>
      </header>
      <div className="flex min-h-0 flex-1">
        <VehicleTable />
        <div className="relative">
          <StreetMap />
          <div className="absolute left-3 top-[13px] flex w-[32px] flex-col rounded-[3px] bg-white shadow-[0_0_3px_rgba(0,0,0,0.55)]">
            <div className="flex h-[31px] items-center justify-center border-b border-[#ccc]">
              <svg viewBox="0 0 14 14" className="size-[14px]"><path d="M7 .5V13.500M.5 7H13.500" stroke="#000" strokeWidth="2.200" /></svg>
            </div>
            <div className="flex h-[32px] items-center justify-center">
              <svg viewBox="0 0 14 14" className="size-[14px]"><path d="M.5 7H13.500" stroke="#000" strokeWidth="2.200" /></svg>
            </div>
          </div>
          <div className="absolute bottom-0 left-[654px] whitespace-nowrap bg-white/75 pl-[5px] font-['Liberation_Sans',sans-serif] text-[11px] leading-[15px] text-[#333]">
            <span className="font-bold text-[#2383ad]">Leaflet</span> | © <span className="text-[#2383ad]">O</span>
          </div>
        </div>
      </div>
    </div>
  );
}

export default function App() {
  return (
    <main className="relative h-[907px] w-[1498px] overflow-hidden bg-black font-['Noto_Sans','Open_Sans',sans-serif]">
      <section className="h-[907px] w-[1278px] overflow-hidden whitespace-nowrap bg-white text-[55px] leading-[69px] tracking-[-0.8px] text-black">
        <div className="ml-[82px] h-[174px] border-b-[3px] border-[#8a8a8a] pl-[293px] pt-[60px] text-[85px] font-bold leading-[100px] tracking-[-0.5px]">Requi</div>
        <div className="w-[466px] overflow-hidden">
          <div className="pl-[247px] pt-[118px] tracking-[-0.5px]">Even in th</div>
          <div className="pl-[171px]">Availability Z</div>
          <div className="pl-[403px]">mu</div>
          <div className="pl-[134px] pt-[106px]">It doesn’t mat</div>
          <div className="pl-[190px]">stop comin</div>
          <div className="pl-[266px]">restored</div>
        </div>
      </section>

      <svg viewBox="320 510 130 50" className="absolute left-[320px] top-[510px] h-[50px] w-[130px]" fill="none" stroke="#e8191c" strokeWidth="4" strokeLinecap="round" strokeLinejoin="round">
        <path d="M328 534.500C345 537 370 536 431 536M430 519C432 527 436 531 440 537C437 542 430 546 423 552.500" />
      </svg>

      <BrowserWindow />

      <svg viewBox="0 0 16 24" className="absolute left-[620px] top-[390px] h-6 w-4">
        <path d="M2 2V18.500L5.800 15L8.500 21L11 20L8.500 14H13.500Z" fill="#fff" stroke="#444" strokeWidth="1.200" />
      </svg>

      <div className="absolute left-[122px] top-[810px] h-[70px] w-[1031px] bg-[#fdfdfd]" />
      <p className="absolute left-[147px] top-[848px] whitespace-nowrap font-['Liberation_Sans',sans-serif] text-[47px] leading-[56px] tracking-[-0.02px] text-white [text-shadow:1.5px_0_0_#000,-1.5px_0_0_#000,0_1.5px_0_#000,0_-1.5px_0_#000,1.1px_1.1px_0_#000,-1.1px_1.1px_0_#000,1.1px_-1.1px_0_#000,-1.1px_-1.1px_0_#000,2.5px_2.5px_0_#777,3.5px_3.5px_0.5px_#888]">
        We do, however, want to see the service restored
      </p>
    </main>
  );
}
